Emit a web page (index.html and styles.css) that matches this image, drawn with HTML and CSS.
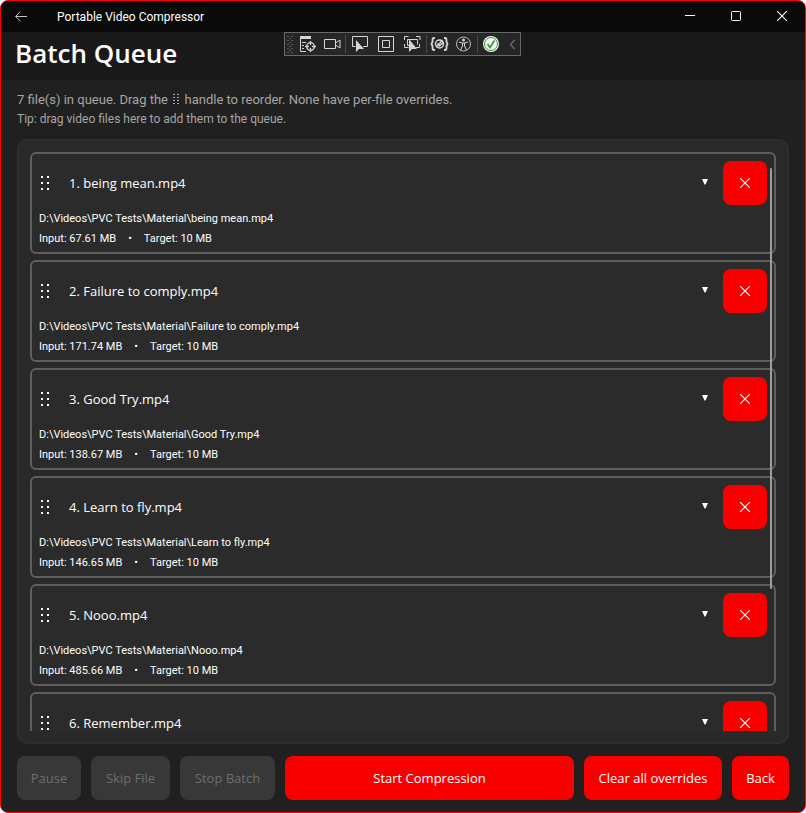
FILE: index.html
```
<!DOCTYPE html>
<html lang="en">
<head>
    <meta charset="UTF-8">
    <meta name="viewport" content="width=device-width, initial-scale=1.0">
    <title>Portable Video Compressor</title>
    <link rel="stylesheet" href="styles.css">
</head>
<body>
    <svg class="symbols" aria-hidden="true">
        <symbol id="grip" viewBox="0 0 10 14">
            <path d="M1 0h2v2h-2zM7 0h2v2h-2zM1 6h2v2h-2zM7 6h2v2h-2zM1 12h2v2h-2zM7 12h2v2h-2z" fill="currentColor"/>
        </symbol>
        <symbol id="cross" viewBox="0 0 10 10">
            <path d="M0 0L10 10M10 0L0 10" fill="none" stroke="currentColor" stroke-width="1.1"/>
        </symbol>
        <symbol id="caret" viewBox="0 0 6 8">
            <path d="M0 0h6L3.500 5.500h-1z" fill="currentColor"/>
        </symbol>
    </svg>

    <div class="window">
        <header class="titlebar">
            <button class="nav-back" aria-label="Go back">
                <svg width="12" height="10" viewBox="0 0 12 10"><path d="M12 5.500H.7M5.200.5l-4.500 5 4.500 4.500" fill="none" stroke="currentColor"/></svg>
            </button>
            <span class="app-name">Portable Video Compressor</span>
            <div class="window-buttons">
                <button aria-label="Minimize"><svg width="10" height="10"><path d="M0 4.500h10" stroke="currentColor"/></svg></button>
                <button aria-label="Maximize"><svg width="10" height="10"><rect x=".5" y=".5" width="9" height="9" rx="1" fill="none" stroke="currentColor"/></svg></button>
                <button aria-label="Close"><svg width="10" height="10"><use href="#cross"/></svg></button>
            </div>
        </header>

        <div class="page-title">
            <h1>Batch Queue</h1>
        </div>

        <!-- debug toolbar floating over the title -->
        <div class="debug-bar">
            <svg width="235" height="22" viewBox="0 0 235 22" fill="none" stroke="#d6d6d6">
                <g stroke="#555" stroke-dasharray="2 2">
                    <path d="M2 3.500h6M2 7.500h6M2 11.500h6M2 15.500h6M2 19.500h6"/>
                    <path d="M4 5.500h4M4 9.500h4M4 13.500h4M4 17.500h4"/>
                </g>
                <path d="M15 3h11v3H15z" fill="#d6d6d6" stroke="none"/>
                <path d="M15.500 6v12.500H21M17 9.500h4M17 12.500h2M17 15.500h2"/>
                <circle cx="25.500" cy="13.500" r="3.800" stroke-width="1.300"/>
                <path d="M25.500 8v4M25.500 15v4M20 13.500h4M27 13.500h4" stroke-width="1.300"/>
                <path d="M39.500 6.500h11v9h-11zM50.500 10l4.500-3v8l-4.500-3"/>
                <path d="M60.500 2v18M141.500 2v18M192.500 2v18" stroke="#484848"/>
                <path d="M70.500 13.500h-3v-10h15v10H78"/>
                <path d="M71 7v12l3-3h5z" fill="#d6d6d6" stroke="none"/>
                <path d="M93.500 3.500h15v15h-15zM97.500 7.500h7v7h-7z"/>
                <path d="M119.500 7V3.500h4M131 3.500h4V7M119.500 11v3.500h4M134.500 11v3.500H131M125 12.500h-2.500v-6h10v5"/>
                <path d="M124 6v13l3-3h5z" fill="#d6d6d6" stroke="none"/>
                <path d="M150 5h-1q-1.500 0-1.500 2v2l-1 2 1 2v2q0 2 1.500 2h1M159 5h1q1.500 0 1.500 2v2l1 2-1 2v2q0 2-1.500 2h-1" stroke-width="1.800"/>
                <circle cx="154.500" cy="11" r="4" stroke-width="1.500"/>
                <path d="M151.500 14l6-7M152.500 10.500l2 2.500 4-4" stroke-width="1.400"/>
                <circle cx="178.500" cy="11" r="7" stroke="#bbb"/>
                <path d="M174 9l3 1h3l3-1M177.500 10v3l-2 4M179.500 10v3l2 4"/>
                <circle cx="178.500" cy="7" r="1.500" fill="#d6d6d6" stroke="none"/>
                <circle cx="206" cy="11" r="8" fill="#f4f4f4" stroke="none"/>
                <circle cx="206" cy="11" r="6.500" stroke="#3a9a3a"/>
                <path d="M202.500 11l2.500 3.500 4.500-7" stroke="#2f962f" stroke-width="1.600"/>
                <path d="M229.500 7l-4 4.500 4 4.500" stroke="#686868" stroke-width="1.400"/>
            </svg>
        </div>

        <main>
            <p class="summary">7 file(s) in queue. Drag the <svg class="hint-grip" width="8" height="10" viewBox="0 0 8 10"><path d="M1 0h2v1h-2zM5 0h2v1h-2zM1 3h2v1h-2zM5 3h2v1h-2zM1 6h2v1h-2zM5 6h2v1h-2zM1 9h2v1h-2zM5 9h2v1h-2z" fill="currentColor"/></svg> handle to reorder. None have per-file overrides.</p>
            <p class="tip">Tip: drag video files here to add them to the queue.</p>

            <section class="queue">
                <ul class="queue-list">
                    <li class="card">
                        <div class="card-head">
                            <svg class="grip"><use href="#grip"/></svg>
                            <h2>1. being mean.mp4</h2>
                            <button class="expand" aria-label="Show options"><svg><use href="#caret"/></svg></button>
                            <button class="remove" aria-label="Remove"><svg><use href="#cross"/></svg></button>
                        </div>
                        <p>D:\Videos\PVC Tests\Material\being mean.mp4</p>
                        <p class="sizes"><span>Input: 67.61 MB</span><span>•</span><span>Target: 10 MB</span></p>
                    </li>
                    <li class="card">
                        <div class="card-head">
                            <svg class="grip"><use href="#grip"/></svg>
                            <h2>2. Failure to comply.mp4</h2>
                            <button class="expand" aria-label="Show options"><svg><use href="#caret"/></svg></button>
                            <button class="remove" aria-label="Remove"><svg><use href="#cross"/></svg></button>
                        </div>
                        <p>D:\Videos\PVC Tests\Material\Failure to comply.mp4</p>
                        <p class="sizes"><span>Input: 171.74 MB</span><span>•</span><span>Target: 10 MB</span></p>
                    </li>
                    <li class="card">
                        <div class="card-head">
                            <svg class="grip"><use href="#grip"/></svg>
                            <h2>3. Good Try.mp4</h2>
                            <button class="expand" aria-label="Show options"><svg><use href="#caret"/></svg></button>
                            <button class="remove" aria-label="Remove"><svg><use href="#cross"/></svg></button>
                        </div>
                        <p>D:\Videos\PVC Tests\Material\Good Try.mp4</p>
                        <p class="sizes"><span>Input: 138.67 MB</span><span>•</span><span>Target: 10 MB</span></p>
                    </li>
                    <li class="card">
                        <div class="card-head">
                            <svg class="grip"><use href="#grip"/></svg>
                            <h2>4. Learn to fly.mp4</h2>
                            <button class="expand" aria-label="Show options"><svg><use href="#caret"/></svg></button>
                            <button class="remove" aria-label="Remove"><svg><use href="#cross"/></svg></button>
                        </div>
                        <p>D:\Videos\PVC Tests\Material\Learn to fly.mp4</p>
                        <p class="sizes"><span>Input: 146.65 MB</span><span>•</span><span>Target: 10 MB</span></p>
                    </li>
                    <li class="card">
                        <div class="card-head">
                            <svg class="grip"><use href="#grip"/></svg>
                            <h2>5. Nooo.mp4</h2>
                            <button class="expand" aria-label="Show options"><svg><use href="#caret"/></svg></button>
                            <button class="remove" aria-label="Remove"><svg><use href="#cross"/></svg></button>
                        </div>
                        <p>D:\Videos\PVC Tests\Material\Nooo.mp4</p>
                        <p class="sizes"><span>Input: 485.66 MB</span><span>•</span><span>Target: 10 MB</span></p>
                    </li>
                    <li class="card">
                        <div class="card-head">
                            <svg class="grip"><use href="#grip"/></svg>
                            <h2>6. Remember.mp4</h2>
                            <button class="expand" aria-label="Show options"><svg><use href="#caret"/></svg></button>
                            <button class="remove" aria-label="Remove"><svg><use href="#cross"/></svg></button>
                        </div>
                    </li>
                </ul>
                <div class="scroll-thumb"></div>
            </section>

            <footer class="actions">
                <button disabled>Pause</button>
                <button disabled>Skip File</button>
                <button disabled>Stop Batch</button>
                <button>Start Compression</button>
                <button>Clear all overrides</button>
                <button>Back</button>
            </footer>
        </main>
    </div>
</body>
</html>
```
FILE: styles.css
```
* {
    box-sizing: border-box;
}

body {
    margin: 0;
    background: #fff;
    color: #fff;
    font-family: "Open Sans", "Noto Sans", sans-serif;
    font-size: 13px;
}

h1, h2, p, ul {
    margin: 0;
    padding: 0;
}

button {
    padding: 0;
    border: none;
    background: none;
    color: inherit;
    font: inherit;
    cursor: pointer;
}

.symbols {
    position: absolute;
    width: 0;
    height: 0;
}

.window {
    position: relative;
    display: flex;
    flex-direction: column;
    height: 100vh;
    border: 1px solid #f00;
    border-radius: 8px;
    background: #202020;
    overflow: hidden;
}

.titlebar {
    display: flex;
    align-items: center;
    height: 31px;
    flex: none;
    background: #0a0a0a;
    font-family: Roboto, sans-serif;
    font-size: 12px;
}

.nav-back {
    width: 40px;
    height: 30px;
    color: #c4c4c4;
}

.app-name {
    margin-left: 16px;
}

.window-buttons {
    display: flex;
    margin-left: auto;
}

.window-buttons button {
    width: 46px;
    height: 30px;
}

.page-title {
    flex: none;
    height: 48px;
    padding-left: 14px;
    background: #191919;
}

h1 {
    font-size: 26px;
    font-weight: 600;
    line-height: 42px;
}

.debug-bar {
    position: absolute;
    top: 31px;
    left: 283px;
    border: 1px solid #686868;
    background: #262626;
}

.debug-bar svg {
    display: block;
}

main {
    flex: 1;
    min-height: 0;
    display: flex;
    flex-direction: column;
    padding: 10px 16px 12px;
}

.summary, .tip {
    color: #a6a6a6;
    font-family: Roboto, sans-serif;
}

.summary {
    font-size: 13px;
    line-height: 20px;
}

.hint-grip {
    margin: 0 1px;
}

.tip {
    font-size: 12px;
    line-height: 18px;
}

.queue {
    position: relative;
    flex: 1;
    min-height: 0;
    margin: 11px 0 12px;
    padding: 11px;
    border: 2px solid #2e2e2e;
    border-radius: 10px;
    background: #292929;
}

.queue-list {
    height: 100%;
    overflow: hidden;
    list-style: none;
}

.card {
    height: 102px;
    margin-bottom: 6px;
    padding: 7px;
    border: 2px solid #5e5e5e;
    border-radius: 6px;
    background: #2b2b2b;
    font-family: Roboto, sans-serif;
    font-size: 11px;
    line-height: 20px;
}

.card-head {
    display: flex;
    align-items: center;
    height: 44px;
    margin-bottom: 4px;
}

.grip {
    width: 10px;
    height: 14px;
    margin: 0 19px 0 1px;
}

h2 {
    flex: 1;
    font-family: "Open Sans", sans-serif;
    font-size: 13px;
    font-weight: 400;
}

.expand, .remove {
    display: flex;
    align-items: center;
    justify-content: center;
}

.expand {
    width: 36px;
    height: 36px;
}

.expand svg {
    width: 6px;
    height: 8px;
}

.remove {
    width: 44px;
    height: 44px;
    border-radius: 8px;
    background: #f80000;
}

.remove svg {
    width: 10px;
    height: 10px;
}

.sizes {
    display: flex;
    gap: 12px;
}

.scroll-thumb {
    position: absolute;
    top: 27px;
    right: 15px;
    width: 2px;
    height: 70%;
    border-radius: 1px;
    background: #9e9e9e;
}

.actions {
    display: grid;
    grid-template-columns: 64px 79px 95px 1fr 138px 57px;
    gap: 10px;
}

.actions button {
    height: 44px;
    border-radius: 8px;
    background: #f80000;
}

.actions button:disabled {
    background: #383838;
    color: #6e6e6e;
    cursor: default;
}
```
